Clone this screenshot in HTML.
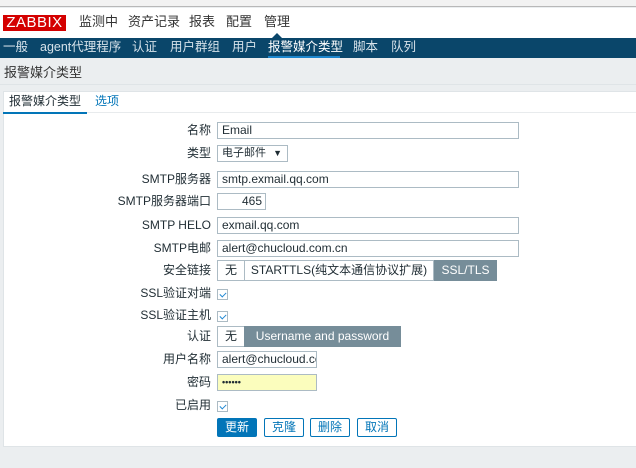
<!DOCTYPE html>
<html><head><meta charset="utf-8"><style>
*{margin:0;padding:0;box-sizing:border-box}
body{width:636px;height:468px;position:relative;background:#ebeef0;font-family:"Liberation Sans","Noto Sans CJK SC",sans-serif;font-size:12px;color:#1f2c33;overflow:hidden}
.a{position:absolute;white-space:nowrap;line-height:14px}
.top{left:0;top:0;width:636px;height:7px;background:#f2f2f2;border-bottom:1px solid #b8b8b8}
.hdr{left:0;top:8px;width:636px;height:30px;background:#fff}
.logo{left:3px;top:15px;width:63px;height:16px;background:#d40000;color:#fff;font-size:15px;line-height:16px !important;text-align:center;letter-spacing:0.5px}
.m{top:15px;font-size:13px;color:#333}
.nav{left:0;top:38px;width:636px;height:20px;background:#0a466a}
.n{top:40px;font-size:12.5px;color:#d6e2ea}
.title{left:4px;top:66px;font-size:13px;color:#333}
.panel{left:3px;top:91px;width:640px;height:356px;background:#fff;border:1px solid #dfe4e7}
.lbl{font-size:12px;text-align:right;right:425px}
.inp{background:#fff;border:1px solid #acbbc4;height:17px;line-height:15px !important;padding-left:4px;font-size:12px;left:217px}
.cb{left:217px;width:11px;height:11px;border:1px solid #acbbc4;background:#fff}
.cb:after{content:"";position:absolute;left:3px;top:1px;width:3px;height:5px;border:solid #1e87d3;border-width:0 1.5px 1.5px 0;transform:rotate(45deg)}
.seg{height:21px;border:1px solid #acbbc4;background:#fff;line-height:19px !important;text-align:center;font-size:12px}
.sel{background:#768d99;border-color:#768d99;color:#fff}
.btn{top:418px;height:19px;border:1px solid #0275b8;color:#0275b8;background:#fff;text-align:center;line-height:17px !important;font-size:12px;border-radius:2px}
</style></head><body>
<div class="a top"></div>
<div class="a hdr"></div>
<div class="a logo">ZABBIX</div>
<div class="a m" style="left:79px">监测中</div>
<div class="a m" style="left:128px">资产记录</div>
<div class="a m" style="left:189px">报表</div>
<div class="a m" style="left:226px">配置</div>
<div class="a m" style="left:264px">管理</div>
<div class="a" style="left:272px;top:33px;width:0;height:0;border-left:5px solid transparent;border-right:5px solid transparent;border-bottom:5px solid #0a466a"></div>
<div class="a nav"></div>
<div class="a n" style="left:3px">一般</div>
<div class="a n" style="left:40px">agent代理程序</div>
<div class="a n" style="left:132px">认证</div>
<div class="a n" style="left:170px">用户群组</div>
<div class="a n" style="left:232px">用户</div>
<div class="a n" style="left:268px;color:#fff">报警媒介类型</div>
<div class="a" style="left:268px;top:56px;width:72px;height:2px;background:#1c86cd"></div>
<div class="a n" style="left:353px">脚本</div>
<div class="a n" style="left:391px">队列</div>
<div class="a title">报警媒介类型</div>
<div class="a" style="left:0;top:84px;width:636px;height:1px;background:#dfe4e7"></div>
<div class="a panel"></div>
<div class="a" style="left:4px;top:112px;width:632px;height:1px;background:#e8ebed"></div>
<div class="a" style="left:9px;top:94px;font-size:12px">报警媒介类型</div>
<div class="a" style="left:3px;top:112px;width:84px;height:2px;background:#0275b8"></div>
<div class="a" style="left:95px;top:94px;font-size:12px;color:#0275b8">选项</div>

<div class="a lbl" style="top:123px">名称</div>
<div class="a inp" style="top:122px;width:302px">Email</div>
<div class="a lbl" style="top:146px">类型</div>
<div class="a inp" style="top:145px;width:71px;font-size:11px">电子邮件 <span style="font-size:9px;position:absolute;right:5px">▼</span></div>
<div class="a lbl" style="top:172px">SMTP服务器</div>
<div class="a inp" style="top:171px;width:302px">smtp.exmail.qq.com</div>
<div class="a lbl" style="top:194px">SMTP服务器端口</div>
<div class="a inp" style="top:193px;width:49px;text-align:right;padding-right:3px">465</div>
<div class="a lbl" style="top:218px">SMTP HELO</div>
<div class="a inp" style="top:217px;width:302px">exmail.qq.com</div>
<div class="a lbl" style="top:241px">SMTP电邮</div>
<div class="a inp" style="top:240px;width:302px">alert@chucloud.com.cn</div>
<div class="a lbl" style="top:263px">安全链接</div>
<div class="a seg" style="left:217px;top:260px;width:28px">无</div>
<div class="a seg" style="left:244px;top:260px;width:190px">STARTTLS(纯文本通信协议扩展)</div>
<div class="a seg sel" style="left:434px;top:260px;width:63px">SSL/TLS</div>
<div class="a lbl" style="top:286px">SSL验证对端</div>
<div class="a cb" style="top:289px"></div>
<div class="a lbl" style="top:308px">SSL验证主机</div>
<div class="a cb" style="top:311px"></div>
<div class="a lbl" style="top:329px">认证</div>
<div class="a seg" style="left:217px;top:326px;width:28px">无</div>
<div class="a seg sel" style="left:244px;top:326px;width:157px">Username and password</div>
<div class="a lbl" style="top:352px">用户名称</div>
<div class="a inp" style="top:351px;width:100px;overflow:hidden">alert@chucloud.com</div>
<div class="a lbl" style="top:375px">密码</div>
<div class="a inp" style="top:374px;width:100px;background:#fbfdbd;font-size:9px;font-weight:bold">••••••</div>
<div class="a lbl" style="top:398px">已启用</div>
<div class="a cb" style="top:401px"></div>
<div class="a btn" style="left:217px;width:40px;background:#0275b8;color:#fff">更新</div>
<div class="a btn" style="left:264px;width:40px">克隆</div>
<div class="a btn" style="left:310px;width:40px">删除</div>
<div class="a btn" style="left:357px;width:40px">取消</div>
</body></html>
